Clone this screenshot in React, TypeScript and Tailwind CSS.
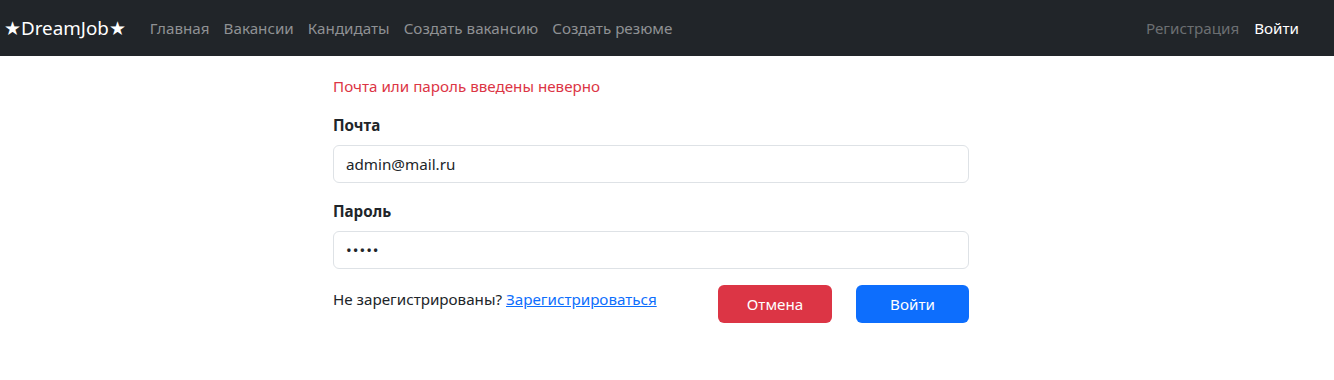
import React from "react";

const navLinks = ["Главная", "Вакансии", "Кандидаты", "Создать вакансию", "Создать резюме"];

export default function App() {
  return (
    <div className="min-h-[380px] bg-white text-[15.2px] text-[#212529] [font-family:'Noto_Sans',sans-serif]">
      <nav className="flex h-[56px] items-center justify-between bg-[#212529] pr-[28px] pl-[4px] pt-[1px]">
        <div className="flex items-center">
          <span className="mr-[17px] text-[18.8px] text-white">★DreamJob★</span>
          <div className="flex items-center">
            {navLinks.map((l) => (
              <a key={l} className="px-[7px] text-[#8f9194]">
                {l}
              </a>
            ))}
          </div>
        </div>
        <div className="flex items-center">
          <a className="px-[8px] text-[#6c6f72]">Регистрация</a>
          <a className="px-[7px] text-white">Войти</a>
        </div>
      </nav>

      <div className="ml-[333px] w-[636px] pt-[18px]">
        <p className="leading-[24px] text-[#dc3545]">Почта или пароль введены неверно</p>
        <label className="mt-[15px] block font-bold leading-[24px]">Почта</label>
        <div className="mt-[8px] flex h-[38px] items-center rounded-[6px] border border-[#dee2e6] px-[12px]">
          admin@mail.ru
        </div>
        <label className="mt-[16px] block font-bold leading-[24px]">Пароль</label>
        <div className="mt-[8px] flex h-[38px] items-center rounded-[6px] border border-[#dee2e6] px-[12px] tracking-[1px]">
          •••••
        </div>
        <div className="mt-[16px] flex items-start">
          <p className="mt-[2px] flex-1 leading-[24px]">
            Не зарегистрированы?{" "}
            <a className="text-[#0d6efd] underline">Зарегистрироваться</a>
          </p>
          <button className="h-[38px] w-[114px] rounded-[6px] bg-[#dc3545] text-white">Отмена</button>
          <button className="ml-[24px] h-[38px] w-[113px] rounded-[6px] bg-[#0d6efd] text-white">Войти</button>
        </div>
      </div>
    </div>
  );
}
